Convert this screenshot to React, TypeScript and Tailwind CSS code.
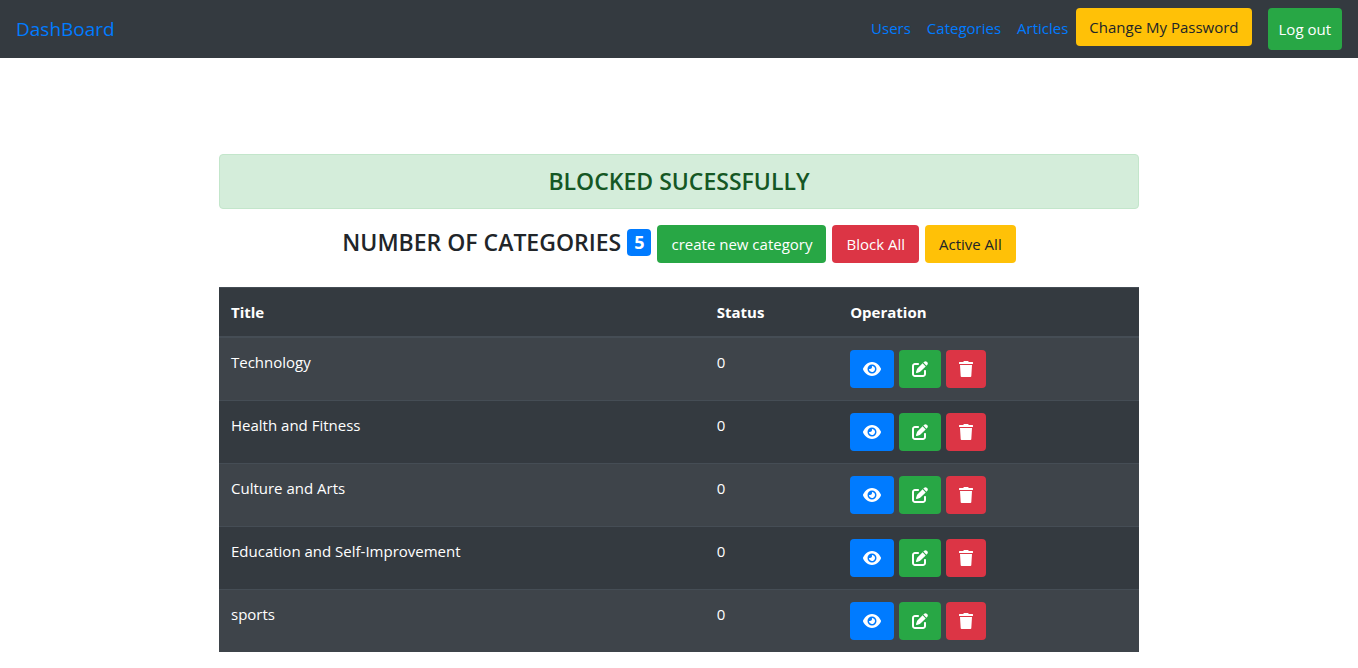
import { FaEye, FaPenToSquare } from "react-icons/fa6";

const links = ["Users", "Categories", "Articles"];

const categories = [
  { title: "Technology", status: 0 },
  { title: "Health and Fitness", status: 0 },
  { title: "Culture and Arts", status: 0 },
  { title: "Education and Self-Improvement", status: 0 },
  { title: "sports", status: 0 },
];

function TrashIcon() {
  return (
    <svg viewBox="0 0 14 16" className="h-4 w-3.5" fill="currentColor" aria-hidden="true">
      <path d="M4.8 0h4.4l.5 1H13.500a.5.5 0 0 1 .5.5v1a.5.5 0 0 1-.5.5H.5a.5.5 0 0 1-.5-.5v-1A.5.5 0 0 1 .5 1h3.800z" />
      <path d="M1 4h12l-.7 11.200a.9.9 0 0 1-.9.8H2.600a.9.9 0 0 1-.9-.8z" />
    </svg>
  );
}

export default function App() {
  return (
    <div className="font-['Segoe_UI','Open_Sans',sans-serif] text-[15px] leading-6 text-[#212529]">
      <nav className="flex items-center justify-between bg-[#343a40] px-4 py-2">
        <a href="#" className="text-[19px] leading-[30px] text-[#007bff]">
          DashBoard
        </a>
        <div className="flex items-start">
          {links.map((label) => (
            <a key={label} href="#" className="p-2 text-[#007bff]">
              {label}
            </a>
          ))}
          <button type="button" className="h-[38px] rounded-sm bg-[#ffc107] px-[13px]">
            Change My Password
          </button>
          <button type="button" className="ml-4 h-[42px] rounded-sm bg-[#28a745] px-[11px] text-white">
            Log out
          </button>
        </div>
      </nav>

      <main className="mx-auto mt-24 max-w-[920px]">
        <div
          role="alert"
          className="rounded-sm border border-[#c3e6cb] bg-[#d4edda] py-3 text-center text-[23px] leading-[29px] font-semibold text-[#155724]"
        >
          BLOCKED SUCESSFULLY
        </div>

        <div className="mt-4 flex items-start justify-center gap-1.5">
          <h1 className="flex items-center gap-1.5 pt-1 text-[23px] leading-[27px] font-semibold">
            NUMBER OF CATEGORIES
            <span className="rounded-sm bg-[#007bff] px-[7px] text-lg leading-[27px] font-bold text-white">5</span>
          </h1>
          <button type="button" className="h-[38px] rounded-sm bg-[#28a745] px-3.5 text-white">
            create new category
          </button>
          <button type="button" className="h-[38px] rounded-sm bg-[#dc3545] px-3.5 text-white">
            Block All
          </button>
          <button type="button" className="h-[38px] rounded-sm bg-[#ffc107] px-3.5">
            Active All
          </button>
        </div>

        <table className="mt-6 w-full border-collapse bg-[#343a40] text-left text-white">
          <thead>
            <tr className="border-t border-b-2 border-[#454d55]">
              <th className="w-[52.8%] p-3 font-bold">Title</th>
              <th className="w-[14.5%] p-3 font-bold">Status</th>
              <th className="p-3 font-bold">Operation</th>
            </tr>
          </thead>
          <tbody>
            {categories.map(({ title, status }) => (
              <tr key={title} className="border-t border-[#454d55] align-top odd:bg-[#3e444a]">
                <td className="p-3">{title}</td>
                <td className="p-3">{status}</td>
                <td className="p-3">
                  <div className="flex gap-[5px]">
                    <button type="button" aria-label="View" className="h-[38px] rounded-sm bg-[#007bff] px-[13px] text-white">
                      <FaEye className="h-4 w-[18px]" />
                    </button>
                    <button type="button" aria-label="Edit" className="h-[38px] rounded-sm bg-[#28a745] px-[13px] text-white">
                      <FaPenToSquare className="size-4" />
                    </button>
                    <button type="button" aria-label="Delete" className="h-[38px] rounded-sm bg-[#dc3545] px-[13px] text-white">
                      <TrashIcon />
                    </button>
                  </div>
                </td>
              </tr>
            ))}
          </tbody>
        </table>
      </main>
    </div>
  );
}
